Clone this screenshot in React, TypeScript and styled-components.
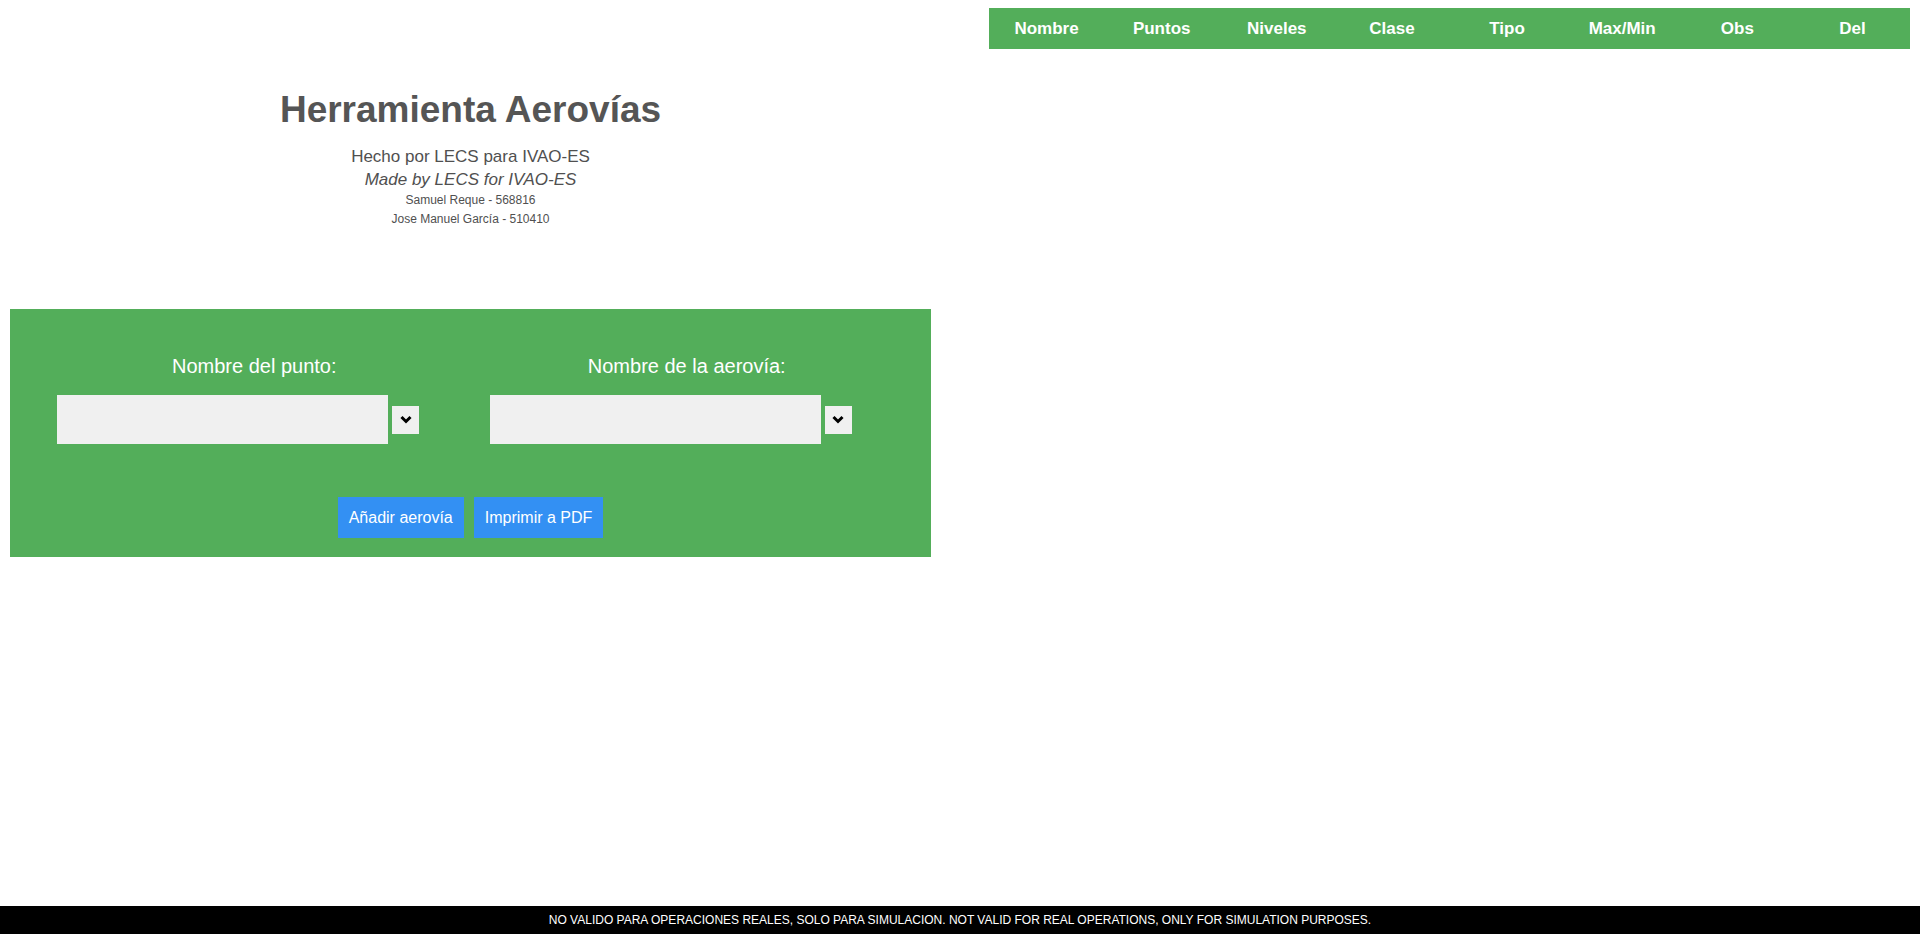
import React, { useState } from "react";
import styled, { createGlobalStyle } from "styled-components";

const GlobalStyle = createGlobalStyle`
  html, body {
    margin: 0;
    padding: 0;
    background: #ffffff;
    font-family: "Liberation Sans", Arial, sans-serif;
  }
`;

const Page = styled.div`
  min-height: 100vh;
  display: flex;
  flex-direction: column;
`;

const Main = styled.main`
  flex: 1;
  display: flex;
  justify-content: space-between;
  align-items: flex-start;
  padding: 8px 10px 0;
`;

const LeftColumn = styled.section`
  width: 921px;
  display: flex;
  flex-direction: column;
`;

const RightColumn = styled.section`
  width: 921px;
`;

const Header = styled.header`
  padding-top: 80px;
  margin-bottom: 80px;
  text-align: center;
`;

const Title = styled.h1`
  margin: 0 0 13px;
  font-size: 37px;
  line-height: 44px;
  font-weight: bold;
  color: #555555;
`;

const Credit = styled.p<{ $small?: boolean; $italic?: boolean }>`
  margin: 0;
  font-size: ${(p) => (p.$small ? "12px" : "17px")};
  line-height: ${(p) => (p.$small ? "19px" : "23px")};
  font-style: ${(p) => (p.$italic ? "italic" : "normal")};
  color: #505050;
`;

const Panel = styled.div`
  background: #53ae5a;
  padding: 45px 28px 19px;
`;

const FieldGrid = styled.div`
  display: grid;
  grid-template-columns: 1fr 1fr;
`;

const Field = styled.div`
  display: flex;
  flex-direction: column;
`;

const Label = styled.label`
  text-align: center;
  color: #ffffff;
  font-size: 20px;
  line-height: 24px;
  margin-bottom: 17px;
`;

const InputRow = styled.div`
  display: flex;
  align-items: center;
  gap: 4px;
  padding-left: 19px;
`;

const TextInput = styled.input`
  width: 331px;
  height: 49px;
  box-sizing: border-box;
  border: none;
  outline: none;
  background: #f0f0f0;
  padding: 0 10px;
  font-family: inherit;
  font-size: 17px;
`;

const DropButton = styled.button`
  width: 27px;
  height: 28px;
  padding: 0;
  border: none;
  background: #f0f0f0;
  display: flex;
  align-items: center;
  justify-content: center;
  cursor: pointer;
`;

const Actions = styled.div`
  display: flex;
  justify-content: center;
  gap: 10px;
  margin-top: 53px;
`;

const ActionButton = styled.button`
  height: 41px;
  padding: 0 11px;
  border: none;
  background: #3390f3;
  color: #ffffff;
  font-family: inherit;
  font-size: 16px;
  cursor: pointer;
`;

const Table = styled.table`
  width: 100%;
  border-collapse: collapse;
  table-layout: fixed;
`;

const HeadCell = styled.th`
  background: #53ae5a;
  color: #ffffff;
  font-size: 17px;
  font-weight: bold;
  height: 41px;
  padding: 0;
  text-align: center;
`;

const Footer = styled.footer`
  height: 28px;
  line-height: 28px;
  background: #000000;
  color: #ffffff;
  font-size: 12px;
  text-align: center;
`;

const Chevron = () => (
  <svg width="12" height="9" viewBox="0 0 12 9">
    <polyline
      points="1.5,2 6,6.5 10.5,2"
      fill="none"
      stroke="#000"
      strokeWidth="3"
    />
  </svg>
);

interface Route {
  id: number;
  nombre: string;
  puntos: string;
}

const columns = ["Nombre", "Puntos", "Niveles", "Clase", "Tipo", "Max/Min", "Obs", "Del"];

const App: React.FC = () => {
  const [punto, setPunto] = useState("");
  const [aerovia, setAerovia] = useState("");
  const [routes, setRoutes] = useState<Route[]>([]);

  const addRoute = () => {
    if (!aerovia) return;
    setRoutes([...routes, { id: Date.now(), nombre: aerovia, puntos: punto }]);
  };

  return (
    <>
      <GlobalStyle />
      <Page>
        <Main>
          <LeftColumn>
            <Header>
              <Title>Herramienta Aerovías</Title>
              <Credit>Hecho por LECS para IVAO-ES</Credit>
              <Credit $italic>Made by LECS for IVAO-ES</Credit>
              <Credit $small>Samuel Reque - 568816</Credit>
              <Credit $small>Jose Manuel García - 510410</Credit>
            </Header>
            <Panel>
              <FieldGrid>
                <Field>
                  <Label>Nombre del punto:</Label>
                  <InputRow>
                    <TextInput value={punto} onChange={(e) => setPunto(e.target.value)} />
                    <DropButton>
                      <Chevron />
                    </DropButton>
                  </InputRow>
                </Field>
                <Field>
                  <Label>Nombre de la aerovía:</Label>
                  <InputRow>
                    <TextInput value={aerovia} onChange={(e) => setAerovia(e.target.value)} />
                    <DropButton>
                      <Chevron />
                    </DropButton>
                  </InputRow>
                </Field>
              </FieldGrid>
              <Actions>
                <ActionButton onClick={addRoute}>Añadir aerovía</ActionButton>
                <ActionButton onClick={() => window.print()}>Imprimir a PDF</ActionButton>
              </Actions>
            </Panel>
          </LeftColumn>
          <RightColumn>
            <Table>
              <thead>
                <tr>
                  {columns.map((c) => (
                    <HeadCell key={c}>{c}</HeadCell>
                  ))}
                </tr>
              </thead>
              <tbody>
                {routes.map((r) => (
                  <tr key={r.id}>
                    <td>{r.nombre}</td>
                    <td>{r.puntos}</td>
                  </tr>
                ))}
              </tbody>
            </Table>
          </RightColumn>
        </Main>
        <Footer>
          NO VALIDO PARA OPERACIONES REALES, SOLO PARA SIMULACION. NOT VALID FOR REAL OPERATIONS, ONLY FOR SIMULATION PURPOSES.
        </Footer>
      </Page>
    </>
  );
};

export default App;
